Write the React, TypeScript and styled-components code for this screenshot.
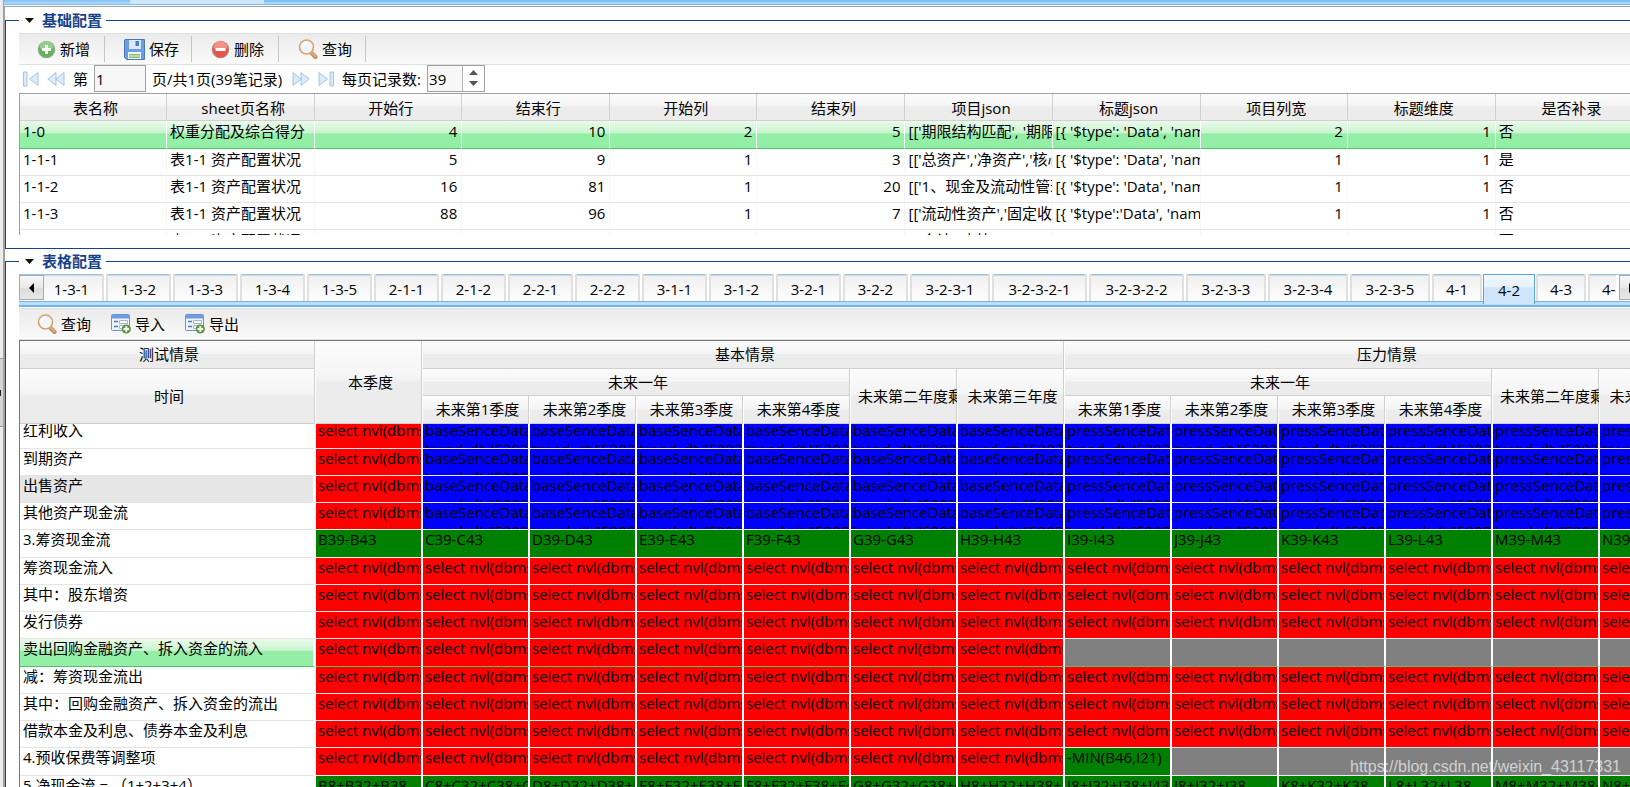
import React from "react";
import styled, { createGlobalStyle, css } from "styled-components";

const Global = createGlobalStyle`
  * { box-sizing: border-box; }
  body { margin: 0; background: #fff; overflow: hidden; }
  body, button, input {
    font-family: "Open Sans", "Noto Sans CJK SC", sans-serif;
    font-size: 15px;
    line-height: 20px;
    color: #000;
  }
`;

const Page = styled.div`
  position: relative;
  display: flex;
  height: 100vh;
  overflow: hidden;
`;
const Gutter = styled.div`
  flex: 0 0 5px;
  display: flex;
  flex-direction: column;
  background: #ececec;
  border-right: 2px solid #a0a0a0;
`;
const Splitter = styled.div`
  height: 69px;
  margin-top: 358px;
  display: flex;
  align-items: center;
  background: #d4d4d4;
  border: solid #999;
  border-width: 1px 0;
  &::before { content: ""; width: 1px; height: 6px; background: #222; }
`;
const Main = styled.main`
  flex: 1;
  min-width: 0;
`;
const TopBand = styled.div`
  height: 7px;
  margin-left: -1px;
  display: flex;
  background: linear-gradient(#7fc0f5 0 2px, #a9d5f8 2px 4px, #79bcf3 4px 5px, #fff 5px 6px, #a0a0a0 6px);
`;
const TopTab = styled.div<{ $on?: boolean }>`
  height: ${(p) => (p.$on ? 4 : 2)}px;
  width: ${(p) => (p.$on ? 134 : 126)}px;
  background: ${(p) => (p.$on ? "#cfe7fb" : "#8cc6f4")};
`;
const Group = styled.fieldset`
  margin: 0 0 2px;
  padding: 3px 0 13px 13px;
  min-width: 0;
  border: 1px solid #15428b;
  border-right: 0;
`;
const Groups = styled.div`
  padding-top: 3px;
`;
const Legend = styled.legend`
  height: 20px;
  padding: 0 4px 0 6px;
  display: flex;
  align-items: center;
  gap: 8px;
  font-weight: 600;
  color: #15428b;
`;
const Toolbar = styled.div<{ $gap: number }>`
  height: 32px;
  display: flex;
  align-items: center;
  gap: ${(p) => p.$gap}px;
  padding-left: 18px;
  background: linear-gradient(#ebebeb, #fafafa);
  border: solid #e0e0e0;
  border-width: 1px 0;
`;
const ToolButton = styled.button<{ $sep?: boolean }>`
  height: 26px;
  display: flex;
  align-items: center;
  gap: 4px;
  padding: 0;
  border: 0;
  background: none;
  white-space: nowrap;
  ${(p) =>
    p.$sep &&
    css`
      width: 68px;
      justify-content: flex-start;
      border-right: 1px solid #c6c6c6;
    `}
  svg { flex: none; }
`;
const Pager = styled.div`
  height: 28px;
  display: flex;
  align-items: center;
  padding: 0 0 1px 4px;
  span, label { white-space: nowrap; }
`;
const PageButton = styled.button`
  display: flex;
  padding: 0;
  margin-right: 8px;
  border: 0;
  background: none;
`;
const PageInput = styled.input`
  width: 52px;
  height: 27px;
  margin: 0 6px;
  padding: 0 1px;
  border: 1px solid #a0a0a0;
  background: #f7f7f7;
`;
const PagerText = styled.span`
  margin-right: 10px;
`;
const Spinner = styled.span`
  display: flex;
  width: 58px;
  height: 27px;
  margin-left: 6px;
  border: 1px solid #a0a0a0;
  background: #f7f7f7;
`;
const SpinInput = styled.input`
  width: 35px;
  padding: 0 1px;
  border: 0;
  border-right: 1px solid #b4b4b4;
  background: #f7f7f7;
`;
const SpinArrows = styled.button`
  flex: 1;
  padding: 0;
  border: 0;
  background: #fff;
  display: flex;
  align-items: center;
  justify-content: center;
`;

const headFill = "linear-gradient(#fcfcfc, #f4f4f4 45%, #ececec 50%, #ececec)";
const selectedFill = "linear-gradient(#eafaea, #cbf4d0 42%, #93efa5 46%, #93efa5)";

const ConfigBox = styled.div`
  height: 142px;
  overflow: hidden;
  border: solid #a0a0a0;
  border-width: 1px 0 0 1px;
`;
const ConfigTable = styled.table`
  width: 1623px;
  table-layout: fixed;
  border-spacing: 0;
`;
const ConfigHead = styled.th`
  height: 27px;
  padding: 1px 0 0 4px;
  font-weight: 400;
  background: ${headFill};
  border-bottom: 1px solid #d0d0d0;
  box-shadow: inset -1px 0 #d0d0d0;
`;
const ConfigRow = styled.tr<{ $on: boolean }>`
  height: ${(p) => (p.$on ? 28 : 27)}px;
  background: ${(p) => (p.$on ? selectedFill : "#fff")};
  td {
    border-right: 1px solid ${(p) => (p.$on ? "#fff" : "#f6f6f6")};
    border-bottom: 1px solid ${(p) => (p.$on ? "#4ec368" : "#e4e4e4")};
  }
`;
const ConfigCell = styled.td<{ $num: boolean }>`
  padding: 0 4px 0 3px;
  overflow: hidden;
  vertical-align: top;
  white-space: nowrap;
  text-align: ${(p) => (p.$num ? "right" : "left")};
`;

const TabStrip = styled.div`
  height: 34px;
  margin-right: -14px;
  display: flex;
  background: linear-gradient(#8cc6f3 0 1px, #fff 1px 27px, #6fb5ee 27px 28px, #bcdef8 28px 31px, #6fb5ee 31px 33px, #fff 33px);
`;
const TabViewport = styled.div`
  flex: 1;
  min-width: 0;
  display: flex;
  overflow: hidden;
`;
const TabList = styled.div`
  display: flex;
  margin-left: -6px;
`;
const Tab = styled.button<{ $w: number; $on: boolean }>`
  flex: 0 0 ${(p) => p.$w}px;
  height: ${(p) => (p.$on ? 30 : 27)}px;
  padding: ${(p) => (p.$on ? 0 : 3)}px 0 0;
  border: solid ${(p) => (p.$on ? "#5fa3dc" : "#fff")};
  border-width: ${(p) => (p.$on ? "1px 1px 0" : "0 1px")};
  background: ${(p) =>
    p.$on
      ? "linear-gradient(#f1f8fe, #e6f2fc 40%, #cfe6fa 45%, #cfe6fa)"
      : "linear-gradient(#8cc6f3 0 1px, #d4d4d4 1px 2px, #f0f0f0 2px, #fefefe)"};
  ${(p) => !p.$on && css`box-shadow: inset 2px 0 #e0e0e0, inset -2px 0 #e0e0e0;`}
`;
const TabArrow = styled.button<{ $side: "left" | "right" }>`
  flex: 0 0 25px;
  height: 25px;
  margin: 1px ${(p) => (p.$side === "left" ? "0 0 0" : "0 0 3px")};
  padding: 0;
  display: flex;
  align-items: center;
  justify-content: center;
  border: 1px solid #a8a8a8;
  background: linear-gradient(#f8f8f8, #e8e8e8 50%, #dcdcdc 55%, #e8e8e8);
`;

const GridBox = styled.div`
  border: solid #777;
  border-width: 1px 0 0 1px;
`;
const GridTable = styled.table`
  width: 1687px;
  table-layout: fixed;
  border-spacing: 0;
`;
const GridHead = styled.th`
  height: 27px;
  padding: 0 4px 2px 7px;
  overflow: hidden;
  font-weight: 400;
  white-space: nowrap;
  background: ${headFill};
  border-right: 1px solid #fff;
  box-shadow: inset -1px -1px #cfcfcf;
`;
const LongHead = styled(GridHead)`
  text-align: left;
`;
const HeadRow = styled.tr<{ $h: number }>`
  height: ${(p) => p.$h}px;
`;
const GridScroll = styled.div`
  overflow: hidden;
  table { margin-top: -3px; }
`;
const fills = { r: "#ff0000", b: "#0000ff", g: "#008000", x: "#808080" };
type Fill = keyof typeof fills;
const CellText = styled.div`
  height: 26px;
  line-height: 19px;
  overflow: hidden;
  white-space: pre;
`;
const GridRow = styled.tr<{ $on: boolean; $hover: boolean }>`
  &:nth-child(4n + 1) ${CellText} { height: 27px; }
  td {
    border-bottom: 1px solid ${(p) => (p.$on ? "#4ec368" : "#ececec")};
  }
  th {
    border-bottom: 1px solid ${(p) => (p.$on ? "#4ec368" : "#e4e4e4")};
    background: ${(p) => (p.$on ? selectedFill : p.$hover ? "#e6e6e6" : "#fff")};
  }
`;
const RowHead = styled.th`
  padding: 0 0 0 3px;
  font-weight: 400;
  text-align: left;
  border-right: 3px solid #fafafa;
`;
const GridCell = styled.td<{ $fill: Fill }>`
  padding: 0 0 0 2px;
  border-right: 2px solid #fff;
  background: ${(p) => fills[p.$fill]};
`;
const Watermark = styled.div`
  position: absolute;
  right: 9px;
  bottom: 10px;
  font: 16px/20px "Liberation Sans", Arial, sans-serif;
  color: rgba(255, 255, 255, 0.65);
`;

const Down = () => (
  <svg width="9" height="5" viewBox="0 0 9 5" aria-hidden><path d="M0 0h9L4.5 5z" fill="#111" /></svg>
);
const AddIcon = () => (
  <svg width="19" height="19" viewBox="0 0 19 19" aria-hidden>
    <circle cx="9.5" cy="9.5" r="8.7" fill="#9aa898" />
    <circle cx="9.5" cy="9.5" r="7.8" fill="#63b35a" />
    <path d="M2.500 8a7 7 0 0 1 14 0q-7 3-14 0z" fill="#93d089" />
    <path d="M8 5h3v3h3v3h-3v3H8v-3H5V8h3z" fill="#fff" />
  </svg>
);
const RemoveIcon = () => (
  <svg width="19" height="19" viewBox="0 0 19 19" aria-hidden>
    <circle cx="9.5" cy="9.5" r="8.7" fill="#bd837c" />
    <circle cx="9.5" cy="9.5" r="7.8" fill="#e5554b" />
    <path d="M2.500 8a7 7 0 0 1 14 0q-7 3-14 0z" fill="#f29286" />
    <path d="M4.500 8h10v3h-10z" fill="#fff" />
  </svg>
);
const SaveIcon = () => (
  <svg width="21" height="21" viewBox="0 0 21 21" aria-hidden>
    <path d="M1 .5h19.5v20H2.5l-2-2V1z" fill="#6c9ce4" stroke="#4a78c0" />
    <path d="M5 1h12v9H5z" fill="#dce9fa" />
    <path d="M11.500 2h3.500v5h-3.500z" fill="#4a7dcc" />
    <path d="M4 13h13v7H4z" fill="#f5f8f2" />
    <path d="M5 15h11v1.500H5zM5 17.500h11V19H5z" fill="#7fbf6a" />
  </svg>
);
const SearchIcon = () => (
  <svg width="20" height="20" viewBox="0 0 20 20" aria-hidden>
    <path d="M13 13.500l4.500 4.500" stroke="#b98a5c" strokeWidth="4" strokeLinecap="round" />
    <path d="M13.500 13.500l4 4" stroke="#dcae7c" strokeWidth="2" strokeLinecap="round" />
    <circle cx="8.500" cy="8" r="7" fill="#eef5fc" stroke="#d9a566" strokeWidth="1.600" />
    <path d="M4.500 8a4 4 0 0 1 4-4" stroke="#fff" strokeWidth="2" fill="none" />
  </svg>
);
const FormIcon = () => (
  <svg width="20" height="20" viewBox="0 0 20 20" aria-hidden>
    <rect x=".5" y=".5" width="18" height="16" rx="1" fill="#eef4fd" stroke="#6a93cf" />
    <path d="M1 1h17v3.500H1z" fill="#6f9be0" />
    <path d="M3 7.500h4M3 12.500h4" stroke="#5579b8" strokeWidth="1.500" />
    <path d="M8.500 6.500h8v3h-8zM8.500 11.500h5v3h-5z" fill="#fff" stroke="#a9b4c4" />
    <circle cx="15.300" cy="15" r="4.600" fill="#5a9a3c" />
    <path d="M15.300 12.200v5.600M12.500 15h5.600" stroke="#fff" strokeWidth="2" />
  </svg>
);
const EdgeIcon = ({ flip }: { flip?: boolean }) => (
  <svg width="16" height="16" viewBox="0 0 16 16" aria-hidden>
    <g transform={flip ? "rotate(180 8 8)" : undefined} fill="#dcebfa" stroke="#a5c4e6">
      <path d="M.5 1h3.500v14H.5zM15 1.500v13L6.500 8z" />
    </g>
  </svg>
);
const StepIcon = ({ flip }: { flip?: boolean }) => (
  <svg width="18" height="16" viewBox="0 0 18 16" aria-hidden>
    <g transform={flip ? "rotate(180 9 8)" : undefined} fill="#dcebfa" stroke="#a5c4e6">
      <path d="M9 1.500v13L.8 8zM17 1.500v13L8.800 8z" />
    </g>
  </svg>
);
const UpDown = () => (
  <svg width="9" height="17" viewBox="0 0 9 17" aria-hidden>
    <path d="M0 5h9L4.500 0zM0 11h9l-4.500 5z" fill="#555" />
  </svg>
);

const configHeads = ["表名称", "sheet页名称", "开始行", "结束行", "开始列", "结束列", "项目json", "标题json", "项目列宽", "标题维度", "是否补录"];
const numeric = [false, false, true, true, true, true, false, false, true, true, false];
const configRows = [
  ["1-0", "权重分配及综合得分", "4", "10", "2", "5", "[['期限结构匹配', '期限", "[{ '$type': 'Data', 'name'", "2", "1", "否"],
  ["1-1-1", "表1-1 资产配置状况", "5", "9", "1", "3", "[['总资产','净资产','核心", "[{ '$type': 'Data', 'name'", "1", "1", "是"],
  ["1-1-2", "表1-1 资产配置状况", "16", "81", "1", "20", "[['1、现金及流动性管理", "[{ '$type': 'Data', 'name'", "1", "1", "否"],
  ["1-1-3", "表1-1 资产配置状况", "88", "96", "1", "7", "[['流动性资产','固定收益", "[{ '$type':'Data', 'name'", "1", "1", "否"],
  ["", "表1-1 资产配置状况", "", "", "", "", "[['合计','占比']", "[{ '", "", "", "否"],
];

const tabs = ["1-3-1", "1-3-2", "1-3-3", "1-3-4", "1-3-5", "2-1-1", "2-1-2", "2-2-1", "2-2-2", "3-1-1", "3-1-2", "3-2-1", "3-2-2", "3-2-3-1", "3-2-3-2-1", "3-2-3-2-2", "3-2-3-3", "3-2-3-4", "3-2-3-5", "4-1", "4-2", "4-3", "4-4"];
const tabWidths: Record<number, number> = { 3: 52, 5: 67, 7: 82, 9: 97 };

const letters = "BCDEFGHIJKLMN".split("");
const gridRows: { label: string; cells: string }[] = [
  { label: "红利收入", cells: "rbbbbbbbbbbbb" },
  { label: "到期资产", cells: "rbbbbbbbbbbbb" },
  { label: "出售资产", cells: "rbbbbbbbbbbbb" },
  { label: "其他资产现金流", cells: "rbbbbbbbbbbbb" },
  { label: "3.筹资现金流", cells: "ggggggggggggg" },
  { label: "筹资现金流入", cells: "rrrrrrrrrrrrr" },
  { label: "其中：股东增资", cells: "rrrrrrrrrrrrr" },
  { label: "发行债券", cells: "rrrrrrrrrrrrr" },
  { label: "卖出回购金融资产、拆入资金的流入", cells: "rrrrrrrxxxxxx" },
  { label: "减：筹资现金流出", cells: "rrrrrrrrrrrrr" },
  { label: "其中：回购金融资产、拆入资金的流出", cells: "rrrrrrrrrrrrr" },
  { label: "借款本金及利息、债券本金及利息", cells: "rrrrrrrrrrrrr" },
  { label: "4.预收保费等调整项", cells: "rrrrrrrgxxxxx" },
  { label: "5.净现金流 = （1+2+3+4）", cells: "ggggggggggggg" },
];
const cellText = (row: number, col: number, fill: Fill) => {
  const c = letters[col];
  if (fill === "r") return "select nvl(dbms";
  if (fill === "b") return (col < 7 ? "baseSenceData" : "pressSenceData") + '\ntrend_dt "520202';
  if (fill === "x") return "";
  if (row === 4) return `${c}39-${c}43`;
  if (row === 12) return "-MIN(B46,I21)";
  return c === "B" || c === "J" || c === "K" || c === "L" ? `${c}8+${c}32+${c}38` : `${c}8+${c}32+${c}38+${c}43`;
};

const GridCols = () => (
  <colgroup>
    <col style={{ width: 296 }} />
    {letters.map((l) => <col key={l} style={{ width: 107 }} />)}
  </colgroup>
);
const Quarters = () => (
  <>
    {[1, 2, 3, 4].map((q) => <GridHead key={q}>未来第{q}季度</GridHead>)}
  </>
);

export default function App() {
  return (
    <Page>
      <Global />
      <Gutter><Splitter /></Gutter>
      <Main>
        <TopBand><TopTab /><TopTab $on /></TopBand>
        <Groups>
          <Group>
            <Legend><Down />基础配置</Legend>
            <Toolbar $gap={19}>
              <ToolButton $sep><AddIcon />新增</ToolButton>
              <ToolButton $sep><SaveIcon />保存</ToolButton>
              <ToolButton $sep><RemoveIcon />删除</ToolButton>
              <ToolButton $sep><SearchIcon />查询</ToolButton>
            </Toolbar>
            <Pager>
              <PageButton aria-label="首页"><EdgeIcon /></PageButton>
              <PageButton aria-label="上一页"><StepIcon /></PageButton>
              <label htmlFor="page">第</label>
              <PageInput id="page" defaultValue="1" />
              <PagerText>页/共1页(39笔记录)</PagerText>
              <PageButton aria-label="下一页"><StepIcon flip /></PageButton>
              <PageButton aria-label="末页"><EdgeIcon flip /></PageButton>
              <label htmlFor="size">每页记录数:</label>
              <Spinner>
                <SpinInput id="size" defaultValue="39" />
                <SpinArrows aria-label="调整记录数"><UpDown /></SpinArrows>
              </Spinner>
            </Pager>
            <ConfigBox>
              <ConfigTable>
                <colgroup>
                  {configHeads.map((h, i) => <col key={h} style={{ width: i % 2 ? 148 : 147 }} />)}
                </colgroup>
                <thead>
                  <tr>{configHeads.map((h) => <ConfigHead key={h}>{h}</ConfigHead>)}</tr>
                </thead>
                <tbody>
                  {configRows.map((r, i) => (
                    <ConfigRow key={i} $on={i === 0}>
                      {r.map((v, j) => <ConfigCell key={j} $num={numeric[j]}>{v}</ConfigCell>)}
                    </ConfigRow>
                  ))}
                </tbody>
              </ConfigTable>
            </ConfigBox>
          </Group>
          <Group>
            <Legend><Down />表格配置</Legend>
            <TabStrip>
              <TabArrow $side="left" aria-label="向左">
                <svg width="5" height="10" viewBox="0 0 5 10" aria-hidden><path d="M5 0v10L0 5z" /></svg>
              </TabArrow>
              <TabViewport>
                <TabList role="tablist">
                  {tabs.map((t) => (
                    <Tab key={t} role="tab" $w={tabWidths[t.length]} $on={t === "4-2"} aria-selected={t === "4-2"}>{t}</Tab>
                  ))}
                </TabList>
              </TabViewport>
              <TabArrow $side="right" aria-label="向右">
                <svg width="5" height="10" viewBox="0 0 5 10" aria-hidden><path d="M0 0v10l5-5z" /></svg>
              </TabArrow>
            </TabStrip>
            <Toolbar $gap={20}>
              <ToolButton><SearchIcon />查询</ToolButton>
              <ToolButton><FormIcon />导入</ToolButton>
              <ToolButton><FormIcon />导出</ToolButton>
            </Toolbar>
            <GridBox>
              <GridTable>
                <GridCols />
                <thead>
                  <HeadRow $h={28}>
                    <GridHead>测试情景</GridHead>
                    <GridHead rowSpan={3}>本季度</GridHead>
                    <GridHead colSpan={6}>基本情景</GridHead>
                    <GridHead colSpan={6}>压力情景</GridHead>
                  </HeadRow>
                  <HeadRow $h={27}>
                    <GridHead rowSpan={2}>时间</GridHead>
                    <GridHead colSpan={4}>未来一年</GridHead>
                    <LongHead rowSpan={2}>未来第二年度剩余季度</LongHead>
                    <GridHead rowSpan={2}>未来第三年度</GridHead>
                    <GridHead colSpan={4}>未来一年</GridHead>
                    <LongHead rowSpan={2}>未来第二年度剩余季度</LongHead>
                    <GridHead rowSpan={2}>未来第三年度</GridHead>
                  </HeadRow>
                  <HeadRow $h={28}>
                    <Quarters />
                    <Quarters />
                  </HeadRow>
                </thead>
              </GridTable>
              <GridScroll>
                <GridTable>
                  <GridCols />
                  <tbody>
                    {gridRows.map((r, i) => (
                      <GridRow key={r.label} $on={i === 8} $hover={i === 2}>
                        <RowHead scope="row"><CellText>{r.label}</CellText></RowHead>
                        {(r.cells.split("") as Fill[]).map((f, j) => (
                          <GridCell key={j} $fill={f}>
                            <CellText>{cellText(i, j, f)}</CellText>
                          </GridCell>
                        ))}
                      </GridRow>
                    ))}
                  </tbody>
                </GridTable>
              </GridScroll>
            </GridBox>
          </Group>
        </Groups>
      </Main>
      <Watermark>https://blog.csdn.net/weixin_43117331</Watermark>
    </Page>
  );
}
